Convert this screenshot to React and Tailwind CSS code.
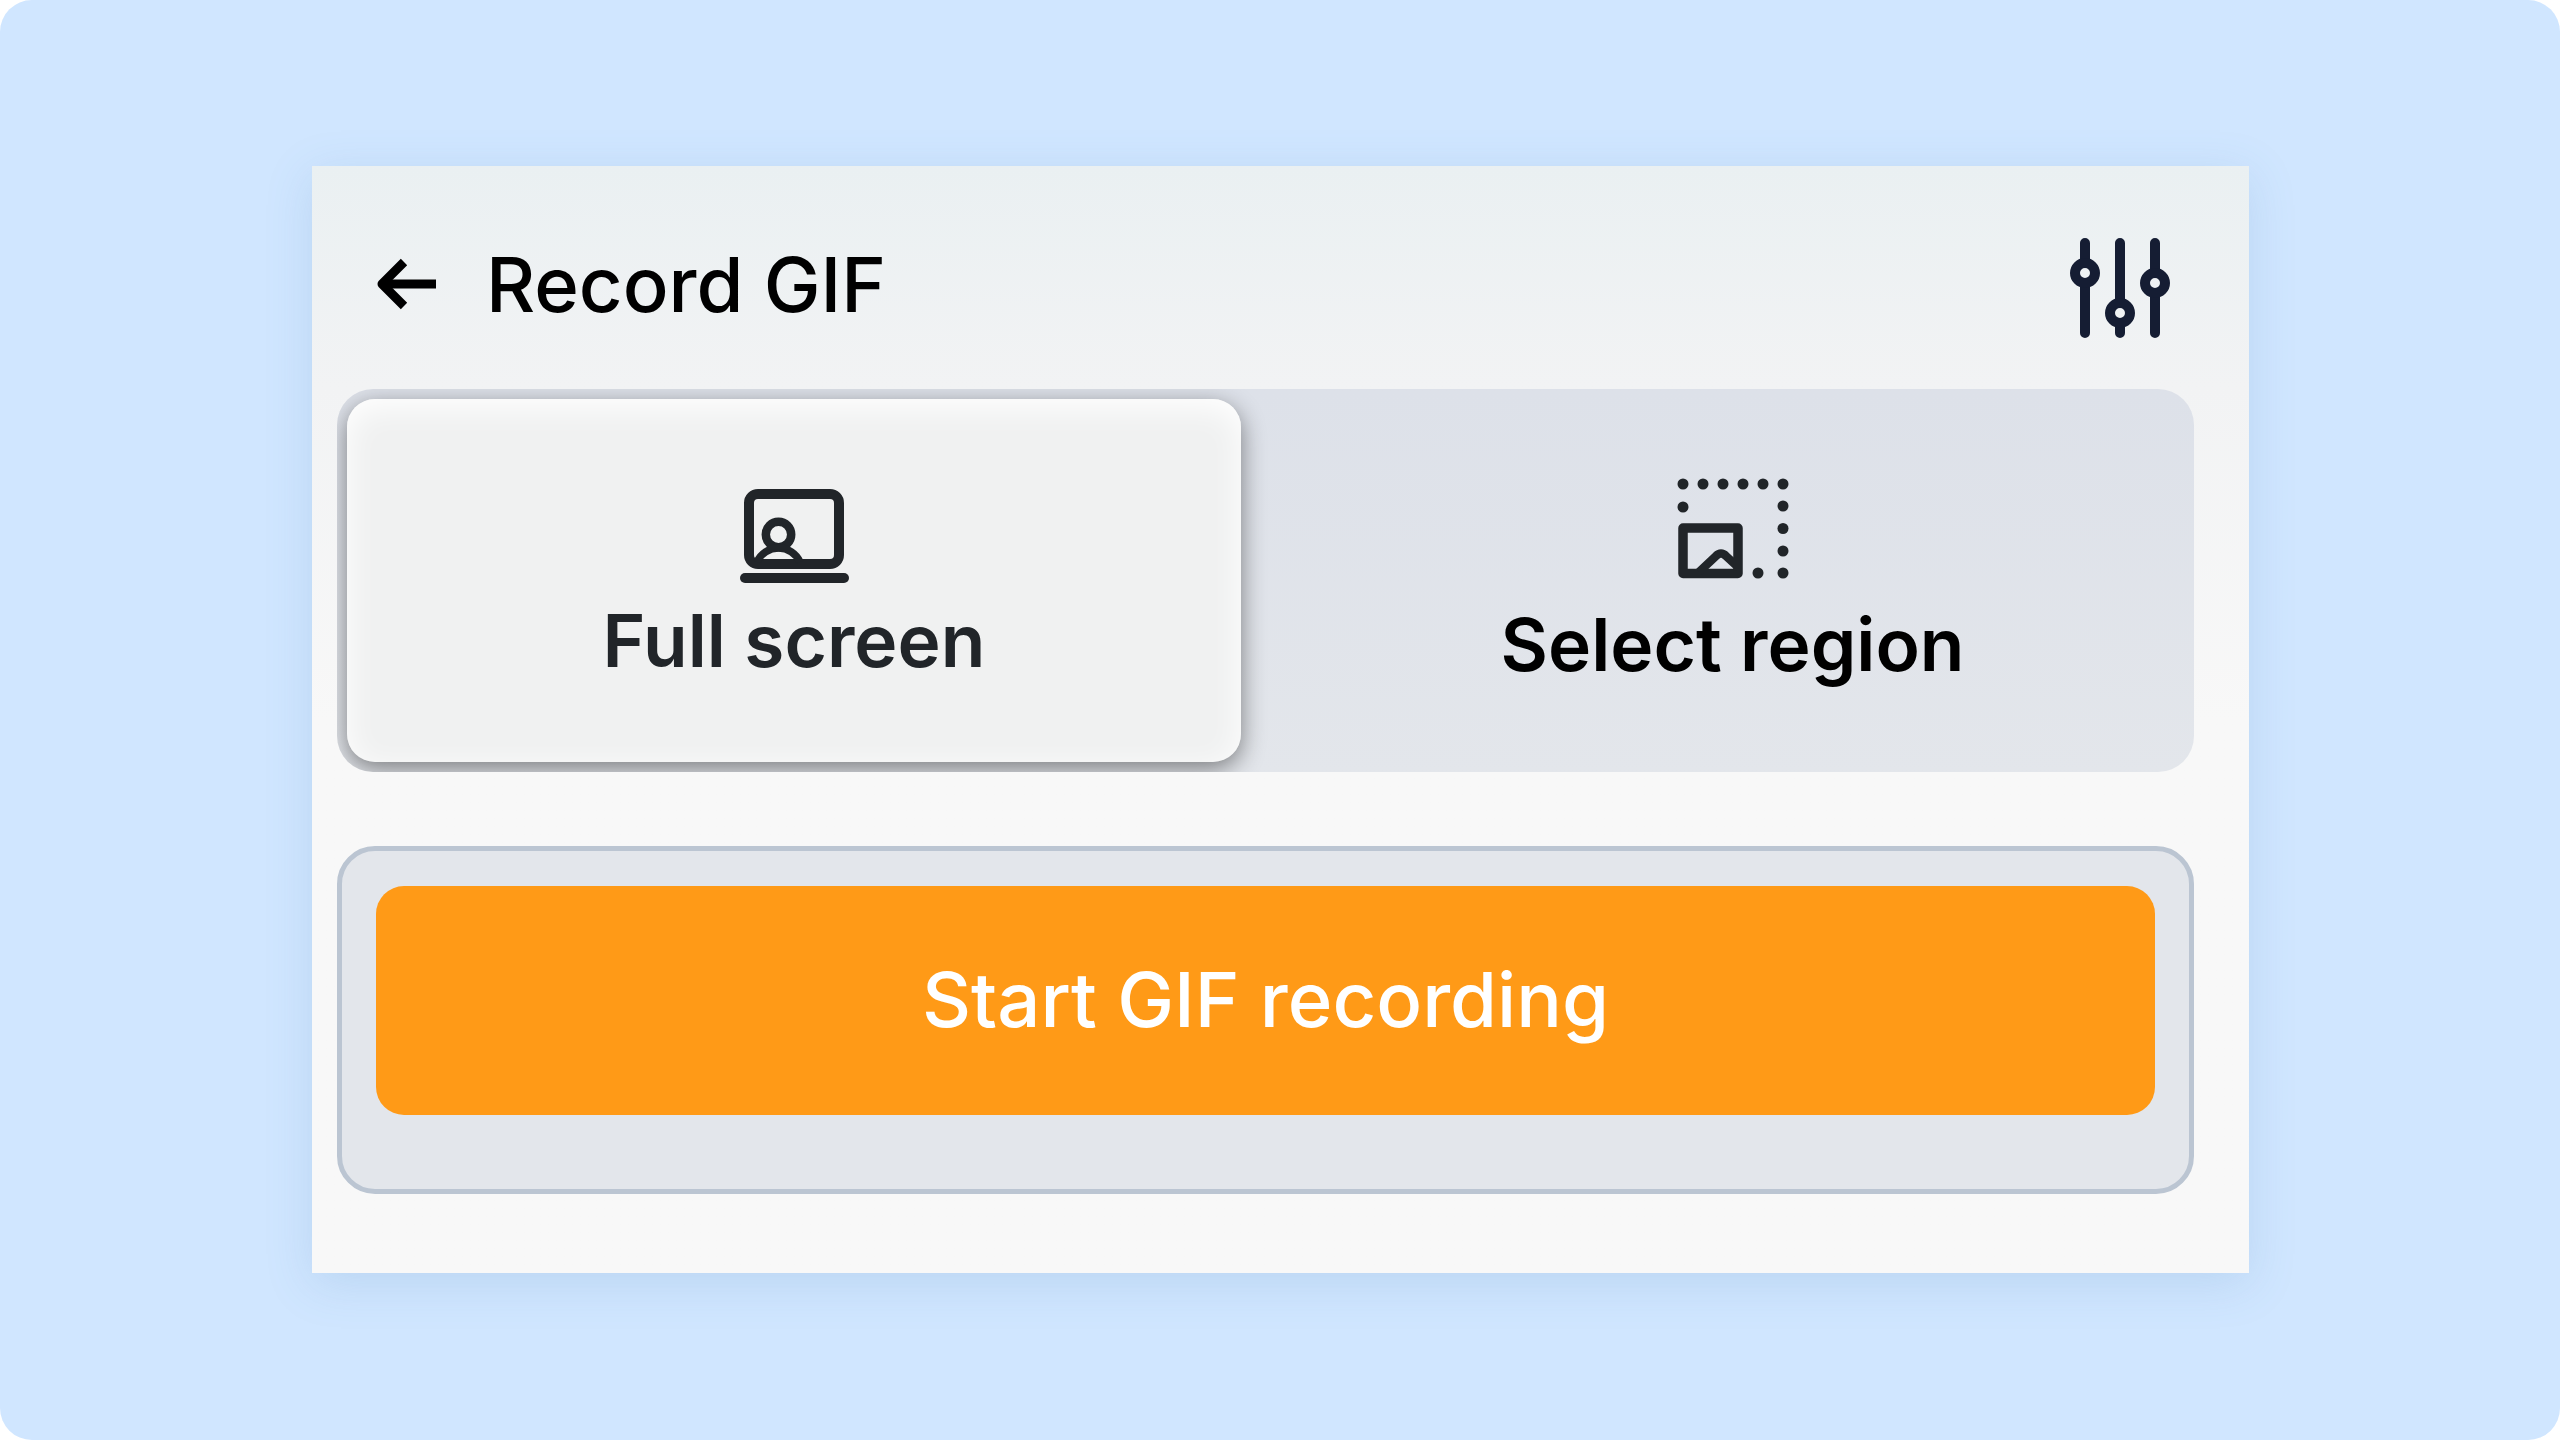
import React, { useState } from 'react';

function BackIcon() {
  return (
    <svg width="60" height="52" viewBox="0 0 60 52" fill="none" stroke="currentColor" strokeWidth="9" aria-hidden="true">
      <path d="M60 26H7" />
      <path d="M28 4L6 26L28 48" strokeLinejoin="round" />
    </svg>
  );
}

function SlidersIcon() {
  return (
    <svg width="100" height="100" viewBox="0 0 20 20" fill="none" stroke="currentColor" strokeWidth="2" strokeLinecap="round" aria-hidden="true">
      <path d="M3 1V5M3 9V19M10 1V13M10 17V19M17 1V7M17 11V19" />
      <circle cx="3" cy="7" r="2" />
      <circle cx="10" cy="15" r="2" />
      <circle cx="17" cy="9" r="2" />
    </svg>
  );
}

function FullScreenIcon() {
  return (
    <svg width="111" height="96" viewBox="0 0 111 96" fill="none" stroke="currentColor" strokeWidth="10" aria-hidden="true">
      <rect x="10" y="6" width="90" height="70" rx="9" />
      <circle cx="39.5" cy="46.5" r="12.7" strokeWidth="8.5" />
      <path d="M18 74A23.5 23.5 0 0 1 61 74" strokeWidth="7.5" />
      <path d="M6 90H105" strokeLinecap="round" />
    </svg>
  );
}

const DOTS = [
  [33, 24], [53, 24], [73, 24], [93, 24], [113, 24], [133, 24],
  [33, 47], [133, 46], [133, 68.5], [133, 91], [133, 113], [108, 113],
];

function RegionIcon() {
  return (
    <svg width="112" height="102" viewBox="27 18 112 102" fill="none" stroke="currentColor" aria-hidden="true">
      {DOTS.map(([x, y]) => (
        <circle key={`${x}-${y}`} cx={x} cy={y} r="5.5" fill="currentColor" stroke="none" />
      ))}
      <rect x="33" y="68" width="55" height="45.5" strokeWidth="9.5" strokeLinejoin="round" />
      <path d="M49 112L66 96Q71 91 76 96L89 108" strokeWidth="8.5" />
    </svg>
  );
}

export default function App() {
  const [mode, setMode] = useState('full');

  return (
    <div className="bg-white">
      <main className="min-h-screen rounded-[32px] bg-[#d0e6ff] py-[166px] pr-[311px] pl-[312px] font-['Inter',sans-serif]">
        <div className="bg-[#f8f8f8] bg-linear-to-b from-[#eaf0f2] from-0% via-[#f2f3f4] via-20% to-[#f8f8f8] to-50% pr-[55px] pb-[79px] pl-[25px] shadow-[0_10px_44px_rgba(80,130,180,0.17)]">
          <header className="flex h-[223px] items-center pt-3 pr-6 pl-[39px]">
            <button type="button" aria-label="Back" className="text-black">
              <BackIcon />
            </button>
            <h1 className="ml-[50px] text-[76px] leading-[96px] font-medium text-black">Record GIF</h1>
            <button type="button" aria-label="Settings" className="ml-auto pt-2 text-[#151d33]">
              <SlidersIcon />
            </button>
          </header>

          {/* Capture mode */}
          <div className="grid h-[383px] grid-cols-[894fr_903fr] gap-10 overflow-hidden rounded-[36px] bg-linear-to-b from-[#dde1e9] to-[#e3e6eb] p-[10px]">
            <button
              type="button"
              aria-pressed={mode === 'full'}
              onClick={() => setMode('full')}
              className="flex flex-col items-center gap-3 rounded-[28px] bg-[#f0f1f1] pt-[89px] text-[#212529] shadow-[0_7px_24px_rgba(0,0,0,0.46),inset_0_8px_32px_#ffffff]"
            >
              <FullScreenIcon />
              <span className="text-[73px] leading-[90px] font-semibold">Full screen</span>
            </button>
            <button
              type="button"
              aria-pressed={mode === 'region'}
              onClick={() => setMode('region')}
              className="flex flex-col items-center gap-5 rounded-[28px] pt-[79px] text-[#212529]"
            >
              <RegionIcon />
              <span className="text-[73px] leading-[90px] font-semibold text-black">Select region</span>
            </button>
          </div>

          <section className="mt-[74px] rounded-[38px] border-5 border-[#bbc5d2] bg-[#e3e6eb] px-[34px] pt-[35px] pb-[74px]">
            <button
              type="button"
              className="h-[229px] w-full rounded-[28px] bg-[#ff9a17] pb-1 text-[76px] leading-[96px] font-medium text-white"
            >
              Start GIF recording
            </button>
          </section>
        </div>
      </main>
    </div>
  );
}
